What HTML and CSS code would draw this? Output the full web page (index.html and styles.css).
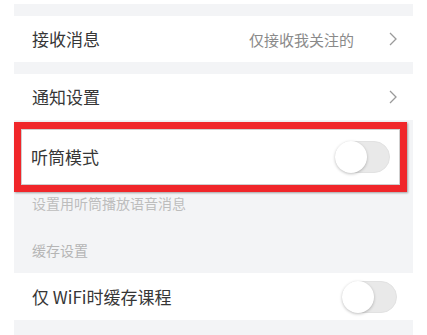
FILE: index.html
```html
<!DOCTYPE html>
<html lang="zh-CN">
<head>
<meta charset="utf-8">
<link rel="stylesheet" href="styles.css">
</head>
<body>
<div class="page">
  <div class="gap"></div>
  <div class="row">
    <span class="label">接收消息</span>
    <span class="value">仅接收我关注的</span>
    <svg class="chev" width="8" height="14" viewBox="0 0 8 14"><path d="M1 1 L7 7 L1 13" fill="none" stroke="#9a9a9a" stroke-width="1.3"/></svg>
  </div>
  <div class="gap"></div>
  <div class="row">
    <span class="label">通知设置</span>
    <svg class="chev" width="8" height="14" viewBox="0 0 8 14"><path d="M1 1 L7 7 L1 13" fill="none" stroke="#9a9a9a" stroke-width="1.3"/></svg>
  </div>
  <div class="highlight">
    <div class="hl-inner">
      <span class="label">听筒模式</span>
      <span class="toggle"><span class="knob"></span></span>
    </div>
  </div>
  <div class="hint">设置用听筒播放语音消息</div>
  <div class="section">缓存设置</div>
  <div class="row row-wifi">
    <span class="label">仅 WiFi时缓存课程</span>
    <span class="toggle"><span class="knob"></span></span>
  </div>
</div>
</body>
</html>
```
FILE: styles.css
```css
html, body {
  margin: 0;
  padding: 0;
  background: #ffffff;
}
body {
  font-family: "Noto Sans CJK SC", "Noto Sans", sans-serif;
  height: 335px;
  overflow: hidden;
}
.page {
  margin: 4px 14px 0 14px;
  background: #f3f4f6;
  height: 331px;
  display: flex;
  flex-direction: column;
}
.gap {
  height: 12px;
}
.row {
  height: 46px;
  background: #ffffff;
  display: flex;
  align-items: center;
  padding: 0 16px 0 18px;
}
.label {
  font-size: 17px;
  color: #363636;
  line-height: 20px;
  flex: 1;
}
.value {
  font-size: 15px;
  color: #8a8a8a;
  margin-right: 35px;
}
.chev {
  display: block;
}
.highlight {
  margin: 2px 6px 0 0;
  border: 7px solid #f0262a;
  box-shadow: 1px 1px 2px rgba(0,0,0,0.35);
  background: #ffffff;
}
.hl-inner {
  height: 54px;
  border: 1px solid #cfcfcf;
  display: flex;
  align-items: center;
  padding: 0 9px 0 9px;
}
.toggle {
  width: 55px;
  height: 32px;
  border-radius: 16px;
  background: #e9e9e9;
  box-sizing: border-box;
  border: 1px solid #e2e2e2;
  position: relative;
  display: block;
}
.knob {
  position: absolute;
  left: -1px;
  top: -1px;
  width: 32px;
  height: 32px;
  border-radius: 50%;
  background: #ffffff;
  box-shadow: 0 1px 3px rgba(0,0,0,0.25);
}
.hint {
  height: 30px;
  padding: 2px 0 0 18px;
  box-sizing: border-box;
  font-size: 14px;
  line-height: 18px;
  color: #bdbdbd;
}
.section {
  height: 51px;
  padding: 19px 0 0 18px;
  box-sizing: border-box;
  font-size: 14px;
  line-height: 18px;
  color: #b5b5b5;
}
.row-wifi {
  height: 47px;
  padding-right: 16px;
}
```
